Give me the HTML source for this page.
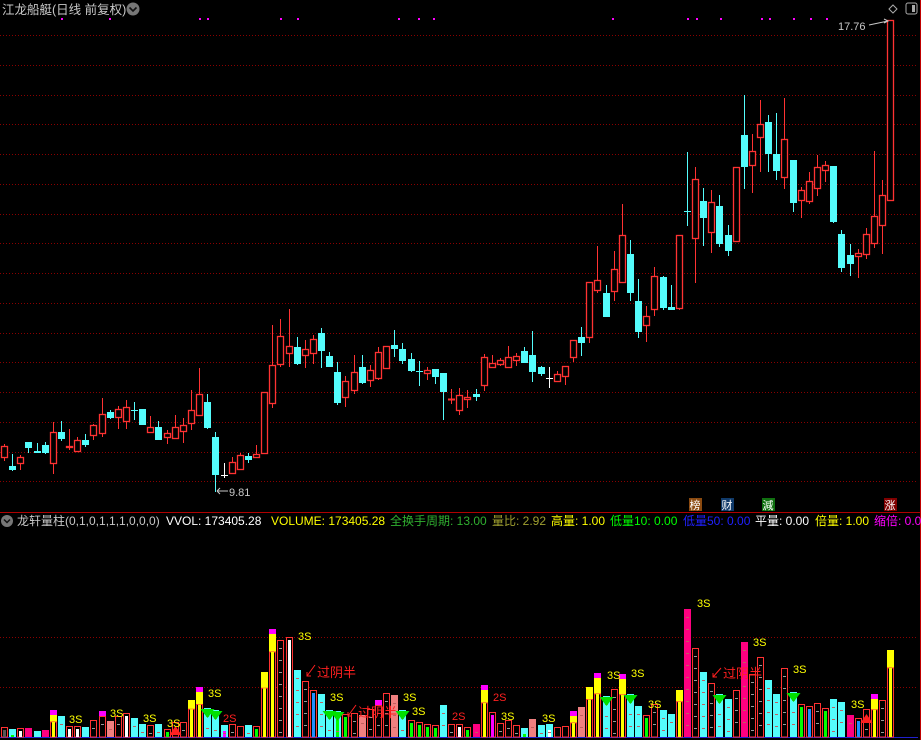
<!DOCTYPE html>
<html><head><meta charset="utf-8">
<style>
html,body{margin:0;padding:0;background:#000;width:921px;height:740px;overflow:hidden}
svg{display:block}
text{font-family:"Liberation Sans","Noto Sans CJK SC",sans-serif}
</style></head><body>
<svg id="s" width="921" height="740" xmlns="http://www.w3.org/2000/svg">
<rect width="921" height="740" fill="#000"/>
<g id="grid"></g>
<g id="cand"></g>
<g id="vol"></g>
<!-- title -->
<text x="2" y="14" font-size="12.5" fill="#c8c8c8">江龙船艇(日线 前复权)</text>
<circle cx="133" cy="9" r="6.5" fill="#777"/>
<path d="M129.5 7.5 L133 11 L136.5 7.5" stroke="#111" stroke-width="1.6" fill="none"/>
<!-- top right icons -->
<path d="M893 5 L897 9 L893 13 L889 9 Z" stroke="#aaa" fill="none"/>
<rect x="906" y="3" width="11" height="11" rx="2" stroke="#aaa" fill="none"/>
<rect x="912" y="5" width="3" height="7" fill="#aaa"/>
<text x="838" y="30" font-size="11" fill="#c8c8c8">17.76</text>
<path d="M869 25 L888 21 M884 19 L888 21 L884 23" stroke="#c8c8c8" fill="none"/>
<!-- low label -->
<path d="M217 491 L228 491 M217 491 L220 488 M217 491 L220 494" stroke="#c8c8c8" fill="none"/>
<text x="229" y="496" font-size="11" fill="#c8c8c8">9.81</text>
<!-- separator -->
<line x1="0" y1="512.5" x2="921" y2="512.5" stroke="#b00000" stroke-width="1"/>
<line x1="920.5" y1="0" x2="920.5" y2="740" stroke="#c00000" stroke-width="1"/>
<!-- badge labels -->
<rect x="689" y="498" width="13" height="13" fill="#8b4a10"/><text x="689.5" y="509" font-size="11" fill="#fff">榜</text>
<rect x="721" y="498" width="13" height="13" fill="#103a6a"/><text x="721.5" y="509" font-size="11" fill="#fff">财</text>
<rect x="762" y="498" width="13" height="13" fill="#107010"/><text x="762.5" y="509" font-size="11" fill="#fff">減</text>
<rect x="884" y="498" width="13" height="13" fill="#800000"/><text x="884.5" y="509" font-size="11" fill="#fff">涨</text>
<!-- header -->
<circle cx="7" cy="521" r="6" fill="#777"/>
<path d="M4 519.5 L7 522.5 L10 519.5" stroke="#111" stroke-width="1.5" fill="none"/>
<g font-size="12">
<text x="17" y="525" fill="#c8c8c8">龙轩量柱(0,1,0,1,1,1,0,0,0)</text>
<text x="166" y="525" fill="#fff">VVOL: 173405.28</text>
<text x="271" y="525" fill="#ffff00">VOLUME: 173405.28</text>
<text x="390" y="525" fill="#30b030">全换手周期: 13.00</text>
<text x="492" y="525" fill="#a0a030">量比: 2.92</text>
<text x="551" y="525" fill="#ffff00">高量: 1.00</text>
<text x="610" y="525" fill="#00ff00">低量10: 0.00</text>
<text x="683" y="525" fill="#2020ff">低量50: 0.00</text>
<text x="755" y="525" fill="#fff">平量: 0.00</text>
<text x="815" y="525" fill="#ffff00">倍量: 1.00</text>
<text x="874" y="525" fill="#ff00ff">缩倍: 0.0</text>
</g>
<g id="lbl" font-size="11"></g>
</svg>
<script>
var NS="http://www.w3.org/2000/svg";
function el(p,t,a){var e=document.createElementNS(NS,t);for(var k in a)e.setAttribute(k,a[k]);p.appendChild(e);return e;}
var G=document.getElementById('grid');
for(var k=0;k<16;k++){var y=Math.round(35+29.75*k)+0.5;el(G,'line',{x1:0,y1:y,x2:918,y2:y,stroke:'#8a0000','stroke-dasharray':'1 2'});}
[637.5,687.5].forEach(function(y){el(G,'line',{x1:0,y1:y,x2:918,y2:y,stroke:'#8a0000','stroke-dasharray':'1 2'});});
el(G,'line',{x1:0,y1:737.5,x2:918,y2:737.5,stroke:'#2020d0'});
// magenta dots
[61,109,199,207,280,297,398,418,433,612,687,696,720,761,769,793,810,826].forEach(function(x){el(G,'rect',{x:x,y:18,width:2,height:2,fill:'#ff00ff'});});
var C=[[446,457,'r',444,461],[466,469,'c',454,471],[457,463,'r',455,470],[442,447,'c',442,453],[451,452,'c',443,453],[445,452,'c',442,454],[432,463,'r',422,474],[432,438,'c',421,441],[446,447,'r',429,450],[440,451,'r',437,451],
[440,444,'c',434,447],[425,435,'r',424,440],[414,433,'r',398,437],[412,417,'c',410,419],[409,417,'r',406,429],[407,421,'r',400,429],[410,410,'c',402,420],[409,424,'c',409,425],[427,432,'r',416,432],[427,439,'c',421,440],
[433,437,'r',430,444],[427,438,'r',415,438],[425,431,'r',418,443],[410,423,'r',390,430],[394,415,'r',368,416],[402,427,'c',394,429],[437,474,'c',432,492],[475,475,'w',463,478],[462,473,'r',457,473],[455,469,'r',453,469],
[456,459,'c',453,463],[454,457,'r',445,458],[392,453,'r',392,454],[365,403,'r',325,408],[336,364,'r',319,367],[346,353,'r',309,367],[347,363,'c',337,365],[349,355,'r',340,368],[339,353,'r',335,364],[333,350,'c',328,368],
[356,366,'c',352,366],[372,402,'c',362,405],[381,397,'r',376,407],[372,390,'r',355,394],[367,382,'c',355,384],[370,380,'r',365,387],[352,378,'r',347,380],[346,368,'r',346,368],[345,348,'c',330,357],[349,360,'c',343,364],
[359,370,'c',353,372],[371,371,'c',361,386],[370,373,'r',367,380],[369,376,'c',369,384],[373,391,'c',373,420],[399,399,'r',389,404],[395,410,'r',388,415],[397,399,'r',390,408],[394,396,'c',389,401],[357,385,'r',354,391],
[363,367,'r',355,368],[360,364,'r',358,366],[357,367,'r',346,367],[356,360,'r',353,366],[351,362,'c',347,363],[355,371,'c',331,382],[367,373,'c',366,376],[378,378,'w',367,388],[374,381,'r',371,381],[366,376,'r',366,385],
[340,357,'r',340,362],[337,342,'c',327,356],[282,337,'r',282,343],[280,290,'r',246,293],[293,316,'c',285,317],[269,291,'r',251,301],[235,282,'r',204,282],[254,292,'c',240,301],[301,331,'c',279,338],[316,325,'r',306,342],
[276,309,'r',267,316],[277,307,'c',276,310],[307,309,'c',285,310],[235,308,'r',235,310],[211,211,'c',152,226],[179,238,'r',167,283],[201,217,'c',188,246],[202,232,'r',190,253],[206,243,'c',195,247],[235,250,'c',225,256],
[167,241,'r',167,242],[135,166,'c',95,189],[151,165,'r',134,193],[124,137,'r',100,172],[122,153,'c',115,172],[154,170,'c',113,180],[139,177,'r',98,189],[160,202,'c',160,212],[190,200,'r',187,218],[181,201,'r',172,204],
[167,188,'r',155,196],[165,170,'r',161,182],[166,221,'c',166,223],[234,267,'c',230,272],[255,263,'c',244,276],[253,256,'r',249,278],[234,254,'r',228,259],[216,243,'r',151,248],[195,225,'r',180,254],[20,200,'r',20,200]];
var CG=document.getElementById('cand');
function X(i){return Math.round(4+8.13*i);}
C.forEach(function(d,i){var x=X(i),t=d[0],b=d[1],ty=d[2];
 var col=ty=='r'?'#ff3232':ty=='c'?'#54fcfc':'#ffffff';
 el(CG,'line',{x1:x+0.5,y1:d[3],x2:x+0.5,y2:d[4],stroke:col});
 if(b-t<1){el(CG,'line',{x1:x-3,y1:t+0.5,x2:x+4,y2:t+0.5,stroke:col,'stroke-width':ty=='r'?2:1});return;}
 if(ty=='r'){el(CG,'rect',{x:x-2.5,y:t+0.5,width:6,height:b-t,fill:'#000',stroke:col,'stroke-width':1.3});}
 else el(CG,'rect',{x:x-3,y:t,width:7,height:b-t+1,fill:col});
});
// volume: [top, type, inner]
var V=[[727,'r','#555'],[729,'c','#0f0'],[728,'r','#fff'],[728,'p'],[731,'c','#0f0'],[730,'p'],[710,'my'],[716,'c'],[726,'r','#fff'],[726,'r','#fff'],
[727,'c'],[720,'r'],[711,'mr'],[721,'s'],[716,'r'],[713,'r','#fff'],[718,'c'],[724,'c'],[725,'r'],[724,'c'],
[729,'r','#0f0'],[722,'r'],[722,'r'],[700,'y'],[687,'my'],[708,'c'],[710,'c'],[725,'c','#f0f'],[724,'r'],[726,'r'],
[725,'c'],[726,'r','#0f0'],[672,'y'],[629,'my'],[640,'r'],[637,'r','#fff'],[670,'c'],[681,'r'],[690,'r','#1e90ff'],[694,'c'],
[710,'c'],[711,'c','#0f0'],[714,'r','#0f0'],[713,'r'],[715,'s'],[709,'r'],[700,'mr'],[693,'r'],[695,'s'],[710,'c'],
[720,'r','#0f0'],[722,'r','#0f0'],[724,'r','#0f0'],[725,'r','#0f0'],[705,'c'],[724,'r'],[724,'r','#fff'],[727,'r','#0f0'],[724,'p'],[685,'my'],
[712,'r','#f0f'],[723,'r'],[720,'r'],[725,'r'],[728,'c','#0f0'],[719,'s'],[725,'c'],[724,'c','#fff'],[727,'r'],[726,'r'],
[711,'my'],[707,'s'],[687,'y'],[673,'my'],[696,'c'],[689,'r'],[674,'my'],[694,'c'],[706,'c'],[715,'r','#0f0'],
[704,'r'],[710,'c'],[714,'c'],[690,'y'],[609,'p'],[648,'r'],[672,'c'],[683,'r'],[694,'c'],[699,'c'],
[690,'r'],[642,'p'],[674,'r'],[657,'r'],[680,'c'],[694,'c'],[668,'r'],[692,'c'],[704,'r','#0f0'],[706,'r','#1e90ff'],
[703,'r'],[708,'r','#0f0'],[699,'c'],[702,'c'],[715,'p'],[718,'r','#1e90ff'],[709,'r'],[694,'my'],[700,'r'],[650,'y']];
var VG=document.getElementById('vol');
var BOT=737;
function dashes(x,t,col){for(var y=t+8;y<BOT-3;y+=12)el(VG,'rect',{x:x-1,y:y,width:3,height:1,fill:col});}
V.forEach(function(d,i){var x=X(i),t=d[0],ty=d[1],inn=d[2];var h=BOT-t;
 if(ty=='c'||ty=='p'||ty=='s'){var col=ty=='c'?'#54fcfc':ty=='p'?'#ff0080':'#f08080';
  el(VG,'rect',{x:x-3,y:t,width:7,height:h,fill:col});
  if(inn)el(VG,'rect',{x:x-1,y:t+6,width:3,height:h-6,fill:inn});
  dashes(x,t,'#c06060');return;}
 var off=0;
 if(ty=='my'||ty=='mr'){el(VG,'rect',{x:x-3,y:t,width:7,height:5,fill:'#ff00ff'});off=5;}
 if(ty=='my'||ty=='y'){var yh=Math.min(18,Math.max(7,h*0.25));el(VG,'rect',{x:x-3,y:t+off,width:7,height:yh,fill:'#ffff00'});off+=yh;
  el(VG,'rect',{x:x-2.5,y:t+off,width:6,height:h-off,fill:'#000',stroke:'#ff3232'});
  el(VG,'rect',{x:x-1,y:t+off,width:3,height:h-off,fill:'#ffff00'});return;}
 el(VG,'rect',{x:x-2.5,y:t+0.5+off,width:6,height:h-off-0.5,fill:'#000',stroke:'#ff3232'});
 if(inn)el(VG,'rect',{x:x-1,y:t+3+off,width:3,height:h-3-off,fill:inn});
 else dashes(x,t+off,'#999');
});
// green triangles
[25,26,40,41,49,74,77,88,97].forEach(function(i){var x=X(i)+0.5,t=V[i][0];
 el(VG,'path',{d:'M'+(x-7)+' '+(t+1)+' L'+(x+7)+' '+(t+1)+' L'+x+' '+(t+10)+' Z',fill:'#00e000'});});
// red triangles
[[21,735],[106,723]].forEach(function(a){var x=X(a[0])+0.5,y=a[1];
 el(VG,'path',{d:'M'+(x-6)+' '+y+' L'+(x+6)+' '+y+' L'+x+' '+(y-9)+' Z',fill:'#ff2020'});});
var L=document.getElementById('lbl');
[[69,723,'3S'],[110,717,'3S'],[143,722,'3S'],[167,727,'3S'],[208,697,'3S'],[298,640,'3S'],[330,701,'3S'],[403,701,'3S'],[412,715,'3S'],
[501,720,'3S'],[542,722,'3S'],[607,679,'3S'],[631,677,'3S'],[648,708,'3S'],[697,607,'3S'],[753,646,'3S'],[793,673,'3S'],[851,708,'3S']].forEach(function(a){
 var t=el(L,'text',{x:a[0],y:a[1],fill:'#ffff00'});t.textContent=a[2];});
[[223,722,'2S'],[452,720,'2S'],[493,701,'2S']].forEach(function(a){var t=el(L,'text',{x:a[0],y:a[1],fill:'#ff2020'});t.textContent=a[2];});
[[307,663,677],[348,703,717],[713,666,678]].forEach(function(a){
 el(L,'path',{d:'M'+(a[0]+8)+' '+(a[1]+2)+' L'+a[0]+' '+(a[2]-1)+' M'+a[0]+' '+(a[2]-5)+' L'+a[0]+' '+(a[2]-1)+' L'+(a[0]+4)+' '+(a[2]-1),stroke:'#ff2020',fill:'none'});
 var t=el(L,'text',{x:a[0]+10,y:a[2],fill:'#ff2020','font-size':13});t.textContent='过阴半';});
</script>
</body></html>
